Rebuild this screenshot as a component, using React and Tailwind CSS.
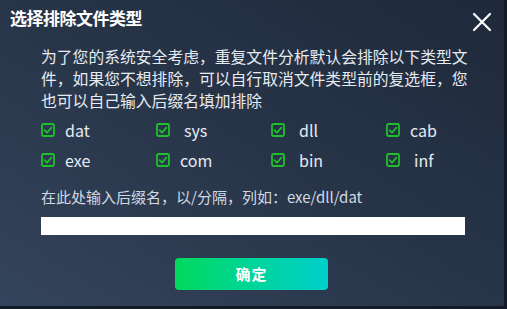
const types = [
  { name: "dat", pad: false },
  { name: "sys", pad: true },
  { name: "dll", pad: true },
  { name: "cab", pad: false },
  { name: "exe", pad: false },
  { name: "com", pad: false },
  { name: "bin", pad: true },
  { name: "inf", pad: true },
];

const CheckBox = () => (
  <svg width="14" height="14" viewBox="0 0 14 14" className="shrink-0">
    <rect x="1" y="1" width="12" height="12" rx="1.5" fill="none" stroke="#1fc02c" strokeWidth="1.8" />
    <path d="M3.6 7.2l2.4 2.4 4.4-5" fill="none" stroke="#1fc02c" strokeWidth="1.7" strokeLinecap="round" strokeLinejoin="round" />
  </svg>
);

const App = () => {
  return (
    <div
      className="w-[507px] h-[309px] bg-[#141b28] overflow-hidden"
      style={{ fontFamily: '"Noto Sans CJK SC", "Noto Sans", sans-serif' }}
    >
      <div className="w-[504px] h-[306px] bg-gradient-to-tr from-[#34445c] via-[#283549] to-[#1e293a] flex flex-col">
        {/* Header */}
        <div className="flex items-start justify-between pl-[10px] pr-[12px] pt-[4px]">
          <h1 className="text-[17px] font-bold text-white leading-[28px] tracking-[-0.5px]">选择排除文件类型</h1>
          <svg width="20" height="20" viewBox="0 0 20 20" className="mt-[8px]">
            <path d="M2 2l16 16M18 2L2 18" stroke="#fff" strokeWidth="2.2" strokeLinecap="round" />
          </svg>
        </div>

        {/* Content */}
        <div className="pl-[41px] pr-[30px]">
          <p className="mt-[14px] w-[432px] text-[15.8px] leading-[22px] text-[#e6ebf2]">
            为了您的系统安全考虑，重复文件分析默认会排除以下类型文件，如果您不想排除，可以自行取消文件类型前的复选框，您也可以自己输入后缀名填加排除
          </p>

          <div className="grid grid-cols-4 w-[460px] mt-[7px] gap-y-[8px]">
            {types.map((t) => (
              <label key={t.name} className="flex items-center h-[22px]">
                <CheckBox />
                <span className={`text-[16px] text-[#e6ebf2] ${t.pad ? "ml-[14px]" : "ml-[10px]"}`}>{t.name}</span>
              </label>
            ))}
          </div>

          <p className="mt-[15px] text-[15px] leading-[22px] text-[#d2d9e2]">在此处输入后缀名，以/分隔，列如：exe/dll/dat</p>

          <input className="mt-[9px] w-[424px] h-[18px] bg-white border-0 outline-none block" />
        </div>

        {/* Footer */}
        <div className="flex justify-center mt-[23px]">
          <button className="w-[153px] h-[32px] ml-[-1px] rounded-[4px] bg-gradient-to-r from-[#00d95a] to-[#00cfcb] text-white font-bold text-[15px] tracking-[1px]">
            确定
          </button>
        </div>
      </div>
    </div>
  );
};

export default App;
